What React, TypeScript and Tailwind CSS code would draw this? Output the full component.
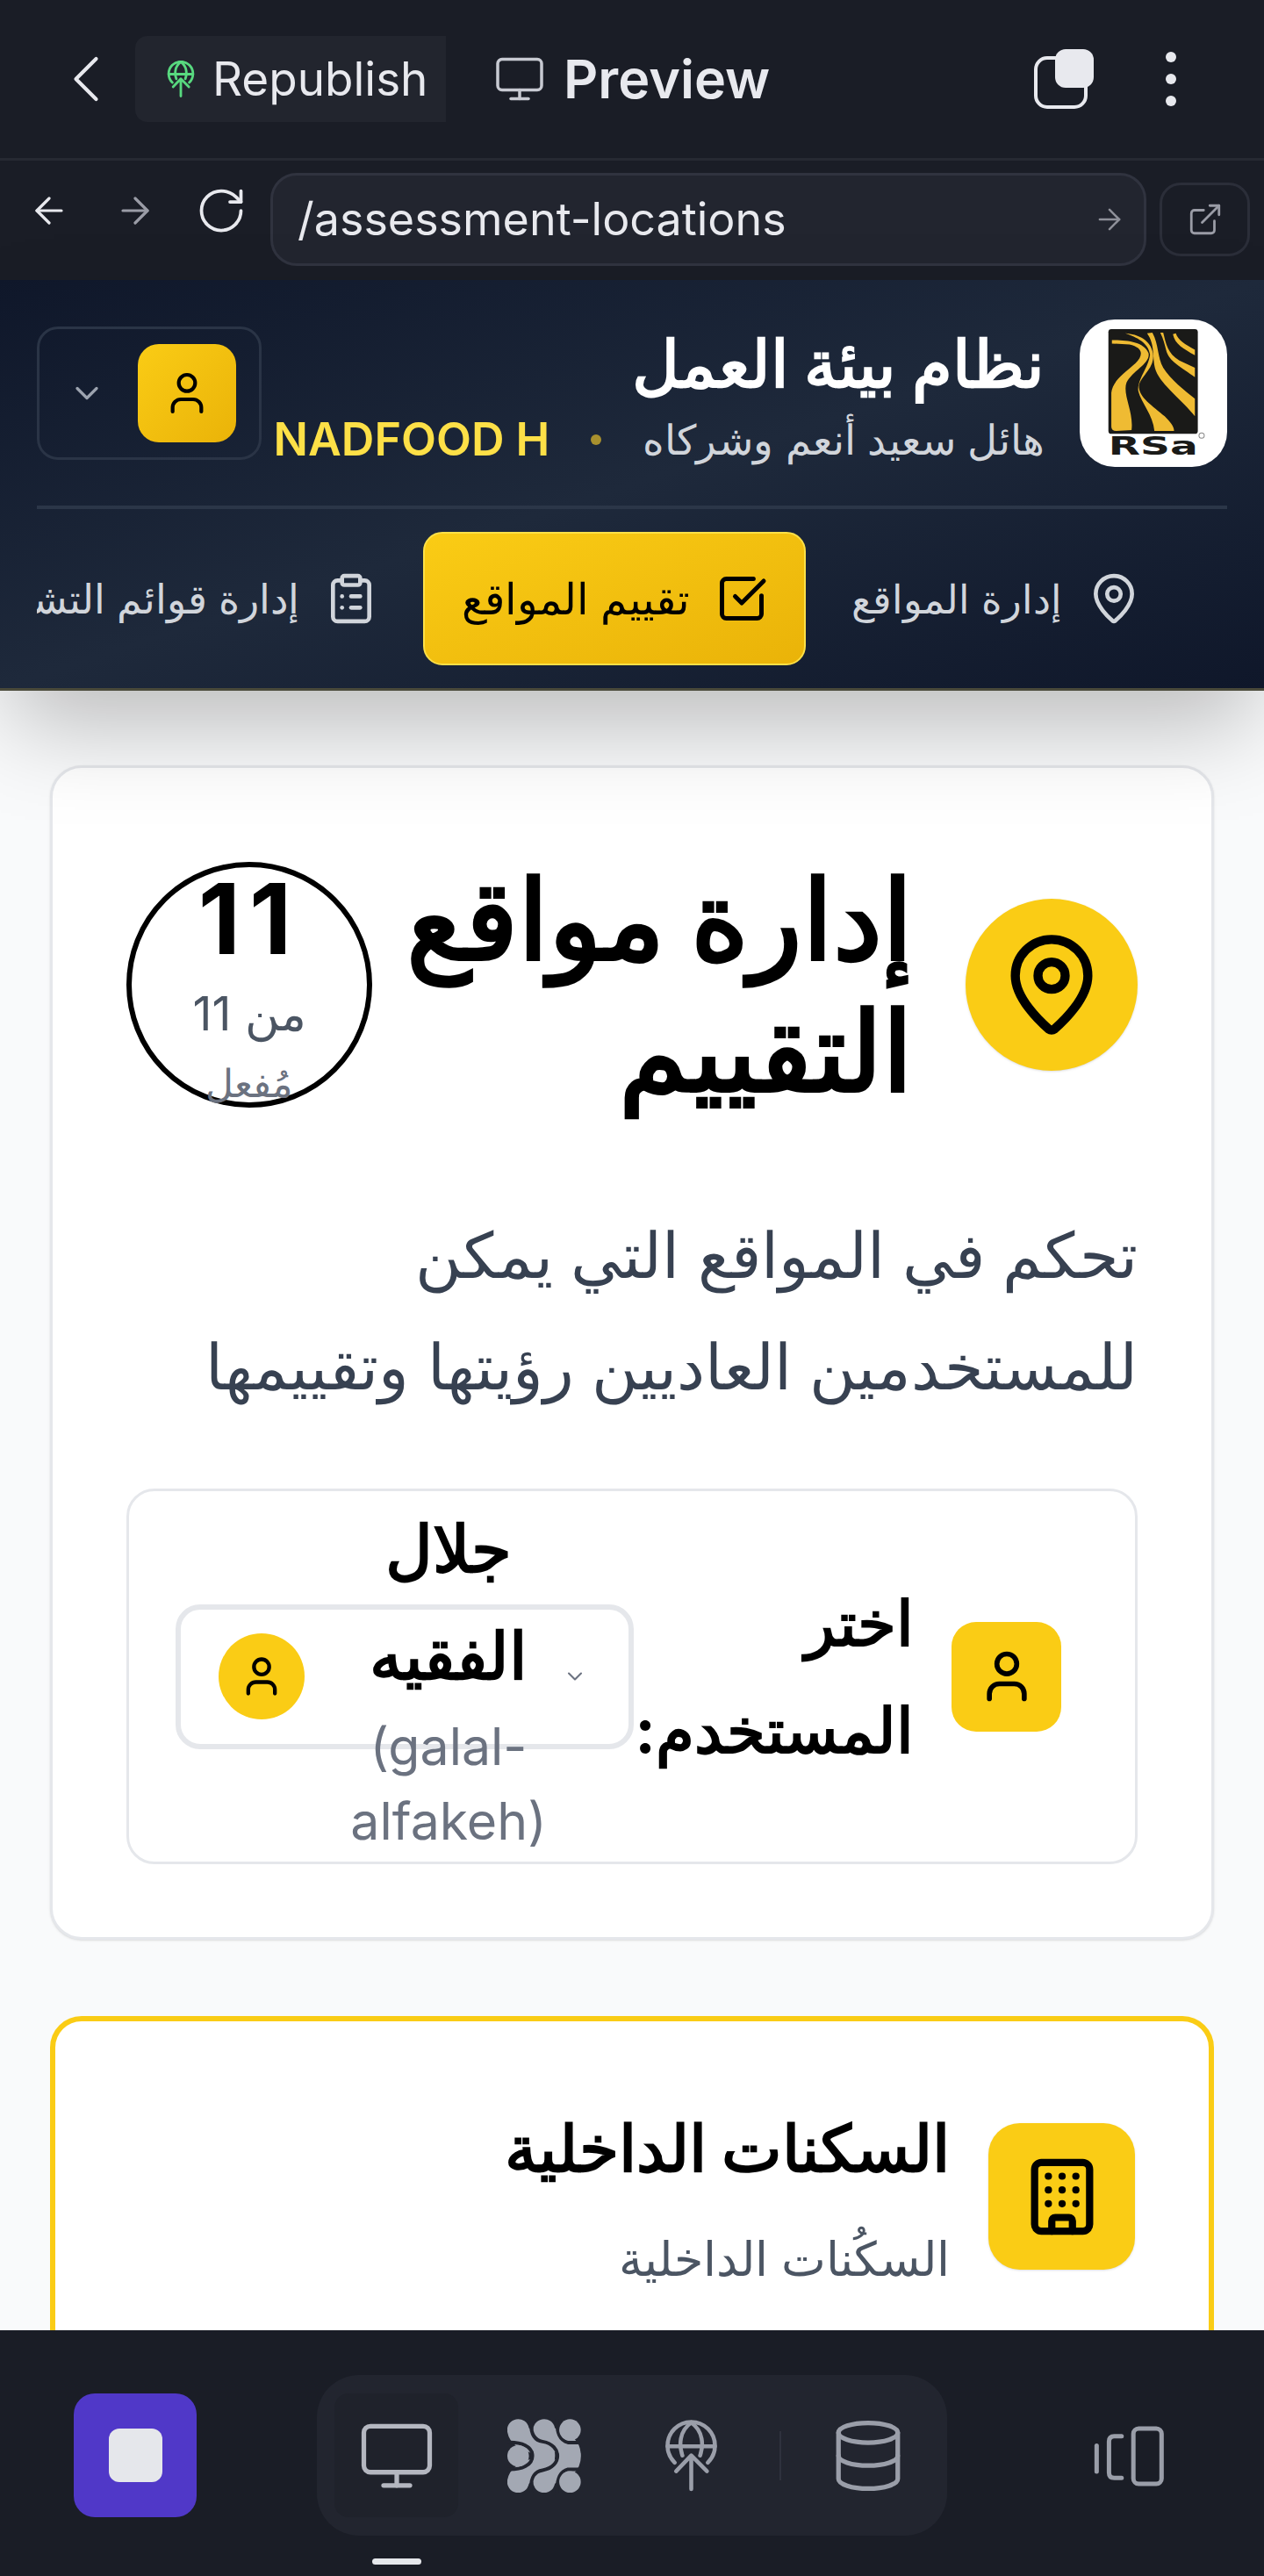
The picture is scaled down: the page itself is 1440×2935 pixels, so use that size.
import React from 'react';
import {
  ArrowLeft,
  ArrowRight,
  Building,
  ChevronDown,
  ChevronLeft,
  ClipboardList,
  Database,
  ExternalLink,
  MapPin,
  Monitor,
  RotateCw,
  SquareCheckBig,
  User,
} from 'lucide-react';

const PublishIcon = ({ className, width }: { className: string; width: number }) => (
  <svg viewBox="590 45 186 252" fill="none" stroke="currentColor" strokeWidth={width} strokeLinecap="round" strokeLinejoin="round" className={className}>
    <path d="M625 195A83 83 0 1 1 741 195" />
    <path d="M600 138H766M683 55C640 85 640 135 652 170M683 55C726 85 726 135 714 170" />
    <path d="M683 288V170M630 225L683 170L738 225" />
  </svg>
);

const DotsIcon = ({ className }: { className: string }) => (
  <svg viewBox="54 44 253 253" className={className}>
    <g fill="none" stroke="currentColor" strokeWidth="75" strokeLinecap="round">
      <path d="M91 82C100 130 180 110 180 171C180 232 100 212 91 260" />
      <path d="M180 82C189 130 269 110 269 171C269 232 189 212 180 260" />
    </g>
    {/* channels between the blobs, in the colour of the tray */}
    <g fill="none" stroke="#22252f" strokeWidth="12">
      <path d="M50 125C105 122 140 140 140 171C140 202 105 220 50 217" />
      <path d="M136 40C130 100 150 118 175 122C210 128 226 150 226 171C226 192 210 214 175 220C150 224 130 240 136 300" />
      <path d="M225 40C222 95 235 118 262 125L320 125" />
      <path d="M225 300C222 247 235 224 262 217L320 217" />
    </g>
    <g fill="currentColor">
      <circle cx="269" cy="82" r="37" />
      <circle cx="91" cy="171" r="37" />
      <circle cx="269" cy="260" r="37" />
    </g>
  </svg>
);

const PanelIcon = ({ className }: { className: string }) => (
  <svg viewBox="45 35 245 212" fill="none" stroke="currentColor" strokeWidth="15" strokeLinecap="round" strokeLinejoin="round" className={className}>
    <rect x="183" y="47" width="96" height="188" rx="18" />
    <path d="M143 73H118Q100 73 100 91V197Q100 215 118 215H143" />
    <path d="M58 105V193" />
  </svg>
);

const FsaLogo = () => (
  <svg viewBox="150 75 503 503" className="h-[168px] w-[168px] shrink-0 rounded-[40px] bg-white">
    <rect x="248" y="108" width="305" height="357" rx="10" fill="#1a1a18" />
    <g fill="#efbb33">
      <path d="M260 145C310 145 370 150 385 190C392 225 330 250 310 290C295 330 335 390 327 452L275 455Q258 455 258 440L258 325C262 285 300 260 340 225C370 195 365 170 320 160L260 157Z" />
      <path d="M305 122C350 125 392 145 400 190C408 240 360 265 352 300C350 340 400 370 440 405C460 425 472 440 472 455L405 455C400 400 360 360 350 320C345 280 385 240 390 195C385 155 345 135 305 122Z" />
      <path d="M380 122L398 120C420 160 415 205 435 240C460 280 510 320 543 345L543 405C500 350 430 300 410 250C395 205 410 165 380 122Z" />
      <path d="M425 120L435 120C445 160 450 190 490 215L543 240L543 272C500 240 455 220 445 180C440 160 435 140 425 120Z" />
      <path d="M468 125L478 122C485 145 510 160 543 178L543 197C505 175 475 160 468 125Z" />
    </g>
    <text direction="ltr" transform="translate(248 537) scale(1.66 1)" fontSize="85" fontWeight="700" fontFamily="'DejaVu Sans', sans-serif" fill="#1a1a18">RSa</text>
    <circle cx="566" cy="471" r="9" fill="none" stroke="#888" strokeWidth="3" />
  </svg>
);

export default function App() {
  return (
    <div className="flex h-[2935px] w-[1440px] flex-col overflow-hidden bg-[#f9fafb] font-['Inter',sans-serif]">
      {/* editor top bar */}
      <div className="flex h-[183px] shrink-0 items-center border-b-[3px] border-[#262932] bg-[#1a1d26] text-[#e8e9ee]">
        <ChevronLeft className="ml-[52px] mr-[10px] h-[92px] w-[92px] shrink-0" strokeWidth={1.1} />
        <div className="flex h-[98px] w-[354px] items-center gap-[20px] rounded-l-[14px] bg-[#22252e] pl-[36px]">
          <PublishIcon className="h-[42px] w-[32px] text-[#58d97f]" width={17} />
          <span className="text-[53px] leading-none">Republish</span>
        </div>
        <Monitor className="ml-[54px] h-[60px] w-[60px] text-[#c8cad2]" strokeWidth={1.4} />
        <span className="ml-[20px] text-[61px] font-semibold leading-none">Preview</span>
        <div className="relative ml-auto mr-[82px] h-[68px] w-[68px]">
          <div className="absolute bottom-0 left-0 h-[60px] w-[61px] rounded-[15px] border-[4px] border-[#e8e9ee]" />
          <div className="absolute right-0 top-0 h-[44px] w-[44px] rounded-[12px] bg-[#e8e9ee]" />
        </div>
        <div className="mr-[100px] flex flex-col gap-[13px]">
          <div className="h-[12px] w-[12px] rounded-full bg-[#e8e9ee]" />
          <div className="h-[12px] w-[12px] rounded-full bg-[#e8e9ee]" />
          <div className="h-[12px] w-[12px] rounded-full bg-[#e8e9ee]" />
        </div>
      </div>

      {/* url row */}
      <div className="flex h-[136px] shrink-0 items-center bg-[#1a1d26] pb-[3px] pl-[32px] pr-[16px] text-[#e8e9ee]">
        <ArrowLeft className="mb-[20px] h-[48px] w-[48px]" strokeWidth={1.6} />
        <ArrowRight className="mb-[20px] ml-[50px] h-[48px] w-[48px] text-[#9a9ca6]" strokeWidth={1.6} />
        <RotateCw className="mb-[20px] ml-[44px] h-[60px] w-[60px]" strokeWidth={1.5} />
        <div className="ml-[26px] flex h-[106px] w-[998px] items-center justify-between rounded-[30px] border-[3px] border-[#30333f] bg-[#22252f] pl-[28px] pr-[20px]">
          <span className="text-[52px] leading-none">/assessment-locations</span>
          <ArrowRight className="h-[38px] w-[38px] text-[#8e9099]" strokeWidth={1.6} />
        </div>
        <div className="ml-[15px] flex h-[84px] w-[103px] items-center justify-center rounded-[24px] border-[3px] border-[#2b2e39]">
          <ExternalLink className="h-[42px] w-[42px] text-[#9a9ca6]" strokeWidth={1.6} />
        </div>
      </div>

      {/* app header */}
      <div dir="rtl" className="relative z-10 h-[468px] shrink-0 border-b-[3px] border-[#4a4a3a] bg-gradient-to-br from-[#0f172a] via-[#1e293b] to-[#0f172a] px-[42px] shadow-[0_50px_100px_-12px_rgba(0,0,0,0.25)]">
        <div className="flex h-[261px] items-start border-b-[4px] border-[#2b3648] pt-[45px]">
          <FsaLogo />
          <div className="mr-[40px] flex flex-col">
            <span className="whitespace-nowrap text-[74px] font-bold leading-[100px] text-white">نظام بيئة العمل</span>
            <div className="mt-[4px] flex items-center whitespace-nowrap">
              <span className="text-[47px] leading-[66px] text-[#d1d5db]">هائل سعيد أنعم وشركاه</span>
              <span className="mx-[47px] h-[12px] w-[12px] rounded-full bg-[#a8902e]" />
              <span dir="ltr" className="text-[52px] font-semibold leading-[66px] text-[#fde047]">NADFOOD H</span>
            </div>
          </div>
          <div className="mr-auto mt-[8px] flex h-[152px] w-[256px] items-center rounded-[24px] border-[3px] border-[#2a3446] pr-[26px]">
            <div className="flex h-[112px] w-[112px] items-center justify-center rounded-[24px] bg-gradient-to-br from-[#facc15] to-[#eab308]">
              <User className="h-[56px] w-[56px] text-black" strokeWidth={1.8} />
            </div>
            <ChevronDown className="mr-[36px] h-[44px] w-[44px] text-[#9ca3af]" strokeWidth={1.8} />
          </div>
        </div>
        <div className="flex h-[204px] items-start overflow-hidden pt-[26px]">
          <div className="flex h-[152px] shrink-0 items-center gap-[28px] pl-[52px] pr-[98px] text-[#d1d5db]">
            <MapPin className="h-[62px] w-[62px]" strokeWidth={1.8} />
            <span className="text-[45px] leading-none">إدارة المواقع</span>
          </div>
          <div className="flex h-[152px] w-[436px] shrink-0 items-center gap-[29px] rounded-[22px] border-[2px] border-[#fde047] bg-gradient-to-br from-[#facc15] to-[#eab308] pr-[41px] text-black">
            <SquareCheckBig className="h-[60px] w-[60px]" strokeWidth={2} />
            <span className="text-[49px] leading-none">تقييم المواقع</span>
          </div>
          <div className="flex h-[152px] shrink-0 items-center gap-[28px] pr-[51px] text-[#d1d5db]">
            <ClipboardList className="h-[62px] w-[62px]" strokeWidth={1.8} />
            <span className="whitespace-nowrap text-[46px] leading-none">إدارة قوائم التشغيل</span>
          </div>
        </div>
      </div>

      {/* page content */}
      <div dir="rtl" className="min-h-0 flex-1 overflow-hidden px-[57px] pt-[85px]">
        <div className="h-[1338px] rounded-[36px] border-[3px] border-[#e5e7eb] bg-white px-[84px] pt-[97px] shadow-sm">
          <div className="flex items-center">
            <div className="flex h-[196px] w-[196px] shrink-0 items-center justify-center rounded-full bg-[#facc15] shadow-sm">
              <MapPin className="h-[124px] w-[124px] text-black" strokeWidth={2} />
            </div>
            <h1 className="mr-[60px] flex-1 text-[126px] font-bold leading-[150px] text-black">إدارة مواقع التقييم</h1>
            <div className="flex h-[280px] w-[280px] shrink-0 flex-col items-center justify-center rounded-full border-[6px] border-black pt-[6px]">
              <span className="text-[112px] font-bold leading-[120px] tracking-[10px] text-black">11</span>
              <span className="text-[54px] leading-[98px] text-[#4b5563]">من 11</span>
              <span className="text-[44px] leading-[60px] text-[#6b7280]">مُفعل</span>
            </div>
          </div>
          <p className="mt-[94px] text-[72px] leading-[127px] text-[#374151]">
            تحكم في المواقع التي يمكن
            <br />
            للمستخدمين العاديين رؤيتها وتقييمها
          </p>
          <div className="mt-[76px] flex h-[428px] items-center rounded-[32px] border-[3px] border-[#e5e7eb] pr-[84px]">
            <div className="flex h-[125px] w-[125px] shrink-0 items-center justify-center rounded-[28px] bg-[#facc15]">
              <User className="h-[68px] w-[68px] text-black" strokeWidth={2} />
            </div>
            <span className="mr-[43px] w-[319px] text-[71px] font-bold leading-[122px] text-black">اختر المستخدم:</span>
            <div className="flex h-[165px] w-[522px] items-center rounded-[28px] border-[6px] border-[#e5e7eb] pl-[43px] pr-[47px]">
              <ChevronDown className="h-[28px] w-[28px] shrink-0 text-[#6b7280]" strokeWidth={1.8} />
              <div className="mr-[15px] flex w-[230px] shrink-0 flex-col items-center text-center">
                <span className="text-[74px] font-bold leading-[122px] text-black">جلال الفقيه</span>
                <span dir="ltr" className="text-[59px] leading-[85px] text-[#6b7280]">(galal-alfakeh)</span>
              </div>
              <div className="mr-auto flex h-[98px] w-[98px] shrink-0 items-center justify-center rounded-full bg-[#facc15]">
                <User className="h-[52px] w-[52px] text-black" strokeWidth={2} />
              </div>
            </div>
          </div>
        </div>
        <div className="mt-[87px] h-[500px] rounded-[36px] border-[6px] border-[#facc15] bg-white pl-[84px] pr-[84px] pt-[116px]">
          <div className="flex items-start">
            <div className="flex h-[167px] w-[167px] shrink-0 items-center justify-center rounded-[36px] bg-[#facc15] shadow-sm">
              <Building className="h-[94px] w-[94px] text-black" strokeWidth={2.1} />
            </div>
            <div className="mr-[44px] flex flex-col">
              <span className="-mt-[19px] text-[73px] font-bold leading-[96px] text-black">السكنات الداخلية</span>
              <span className="mt-[43px] text-[54px] leading-[70px] text-[#4b5563]">السكُنات الداخلية</span>
            </div>
          </div>
        </div>
      </div>

      {/* bottom tool bar */}
      <div className="relative z-10 flex h-[280px] shrink-0 items-start bg-[#1a1d26] pl-[84px] pt-[51px]">
        <div className="mt-[21px] flex h-[141px] w-[140px] items-center justify-center rounded-[24px] bg-[#5038c8]">
          <div className="h-[61px] w-[61px] rounded-[12px] bg-[#e5e7eb]" />
        </div>
        <div className="ml-[137px] flex h-[183px] w-[718px] items-center rounded-[48px] bg-[#22252f] pl-[20px]">
          <div className="flex h-[141px] w-[141px] shrink-0 items-center justify-center rounded-[16px] bg-[#1f222b]">
            <Monitor className="h-[90px] w-[90px] text-[#b4b7c0]" strokeWidth={1.4} />
          </div>
          <DotsIcon className="ml-[56px] h-[84px] w-[84px] shrink-0 text-[#a3a8b3]" />
          <PublishIcon className="ml-[95px] h-[82px] w-[61px] shrink-0 text-[#9a9ea9]" width={14} />
          <div className="ml-[70px] h-[56px] w-[2px] shrink-0 bg-[#2f323d]" />
          <Database className="ml-[54px] h-[90px] w-[90px] shrink-0 text-[#9a9ea9]" strokeWidth={1.4} />
        </div>
        <PanelIcon className="ml-[166px] mt-[57px] h-[71px] w-[82px] text-[#9a9ea9]" />
        <div className="absolute bottom-[13px] left-[424px] h-[7px] w-[56px] rounded-full bg-[#e5e7eb]" />
      </div>
    </div>
  );
}
